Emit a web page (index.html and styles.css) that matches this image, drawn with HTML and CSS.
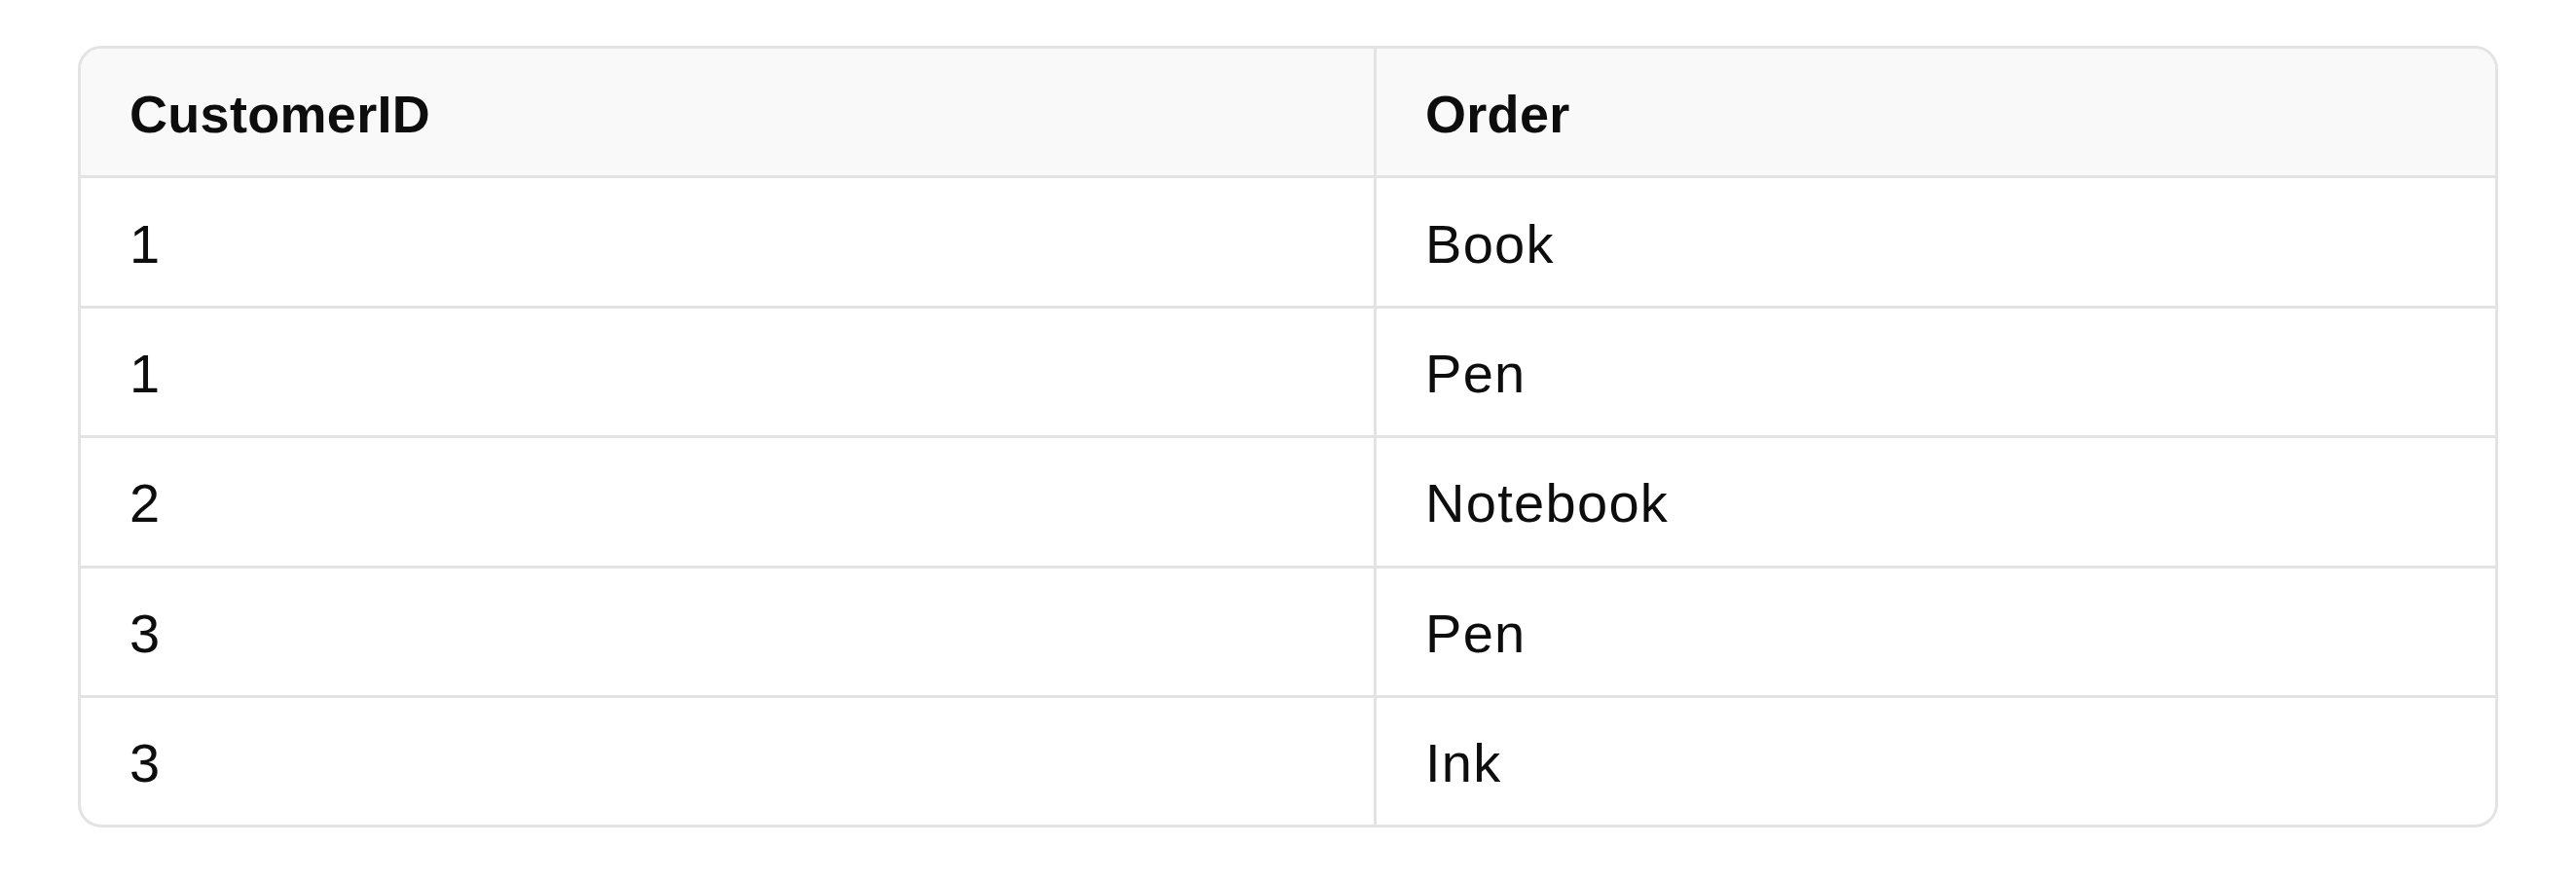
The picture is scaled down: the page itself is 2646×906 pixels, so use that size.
FILE: index.html
```html
<!DOCTYPE html>
<html lang="en">
<head>
<meta charset="utf-8">
<title>Orders</title>
<link rel="stylesheet" href="styles.css">
</head>
<body>
<div class="table-wrap">
  <div class="grid">
    <div class="cell head">CustomerID</div>
    <div class="cell head">Order</div>
    <div class="cell">1</div>
    <div class="cell">Book</div>
    <div class="cell">1</div>
    <div class="cell">Pen</div>
    <div class="cell">2</div>
    <div class="cell">Notebook</div>
    <div class="cell">3</div>
    <div class="cell">Pen</div>
    <div class="cell last">3</div>
    <div class="cell last">Ink</div>
  </div>
</div>
</body>
</html>
```

FILE: styles.css
```css
html, body {
  margin: 0;
  padding: 0;
  background: #ffffff;
}
body {
  padding: 47px 0 0 80px;
  font-family: "Liberation Sans", Arial, sans-serif;
  color: #0d0d0d;
}
.table-wrap {
  width: 2486px;
  box-sizing: border-box;
  border: 3px solid #e3e3e3;
  border-radius: 24px;
  overflow: hidden;
}
.grid {
  display: grid;
  grid-template-columns: 1331px 1fr;
}
.cell {
  box-sizing: border-box;
  height: 133.4px;
  display: flex;
  align-items: center;
  padding: 3px 0 0 50px;
  border-bottom: 3px solid #e3e3e3;
  font-size: 56px;
  letter-spacing: 1.3px;
}
.cell:nth-child(odd) {
  border-right: 3px solid #e3e3e3;
}
.cell.head {
  background: #f9f9f9;
  font-weight: 700;
  letter-spacing: 0.3px;
  font-size: 54px;
}
.cell.last {
  border-bottom: none;
  height: 130.4px;
}
```
